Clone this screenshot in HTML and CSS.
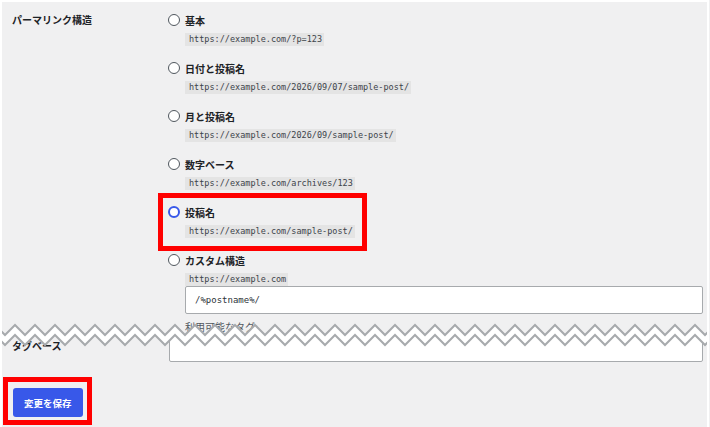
FILE: index.html
```
<!DOCTYPE html>
<html lang="ja">
<head>
<meta charset="utf-8">
<title>パーマリンク設定</title>
<link rel="stylesheet" href="styles.css">
</head>
<body>
<div class="frame">
  <form class="form">
    <div class="row">
      <div class="label">パーマリンク構造</div>
      <div class="field">
        <div class="option">
          <label class="opt-label"><span class="radio"></span>基本</label>
          <code class="code">https://example.com/?p=123</code>
        </div>
        <div class="option">
          <label class="opt-label"><span class="radio"></span>日付と投稿名</label>
          <code class="code">https://example.com/2026/09/07/sample-post/</code>
        </div>
        <div class="option">
          <label class="opt-label"><span class="radio"></span>月と投稿名</label>
          <code class="code">https://example.com/2026/09/sample-post/</code>
        </div>
        <div class="option">
          <label class="opt-label"><span class="radio"></span>数字ベース</label>
          <code class="code">https://example.com/archives/123</code>
        </div>
        <div class="option selected">
          <label class="opt-label"><span class="radio checked"></span>投稿名</label>
          <code class="code">https://example.com/sample-post/</code>
        </div>
        <div class="option custom">
          <label class="opt-label"><span class="radio"></span>カスタム構造</label>
          <code class="code">https://example.com</code>
          <div class="text-input indent"><span class="mono">/%postname%/</span></div>
          <p class="tags">利用可能なタグ:</p>
        </div>
      </div>
    </div>
    <div class="row tag-row">
      <div class="label tag-label">タグベース</div>
      <div class="field">
        <div class="text-input wide"></div>
      </div>
    </div>
    <div class="submit">
      <span class="mark"><button type="button" class="btn">変更を保存</button></span>
    </div>
  </form>
  <svg class="tear" width="712" height="32" viewBox="0 0 712 32" aria-hidden="true">
    <defs>
      <pattern id="zz" x="5" y="0" width="20" height="32" patternUnits="userSpaceOnUse">
        <path d="M-10 7 L0 17 L10 7 L20 17 L30 7 L30 17 L20 27 L10 17 L0 27 L-10 17 Z" fill="#ffffff"/>
        <path d="M-10 7 L0 17 L10 7 L20 17 L30 7" fill="none" stroke="#a7aaad" stroke-width="2"/>
        <path d="M-10 17 L0 27 L10 17 L20 27 L30 17" fill="none" stroke="#a7aaad" stroke-width="2"/>
      </pattern>
    </defs>
    <rect x="0" y="0" width="712" height="32" fill="url(#zz)"/>
  </svg>
</div>
</body>
</html>
```
FILE: styles.css
```
html, body {
  margin: 0;
  padding: 0;
}
body {
  background: #f0f0f1;
  color: #1d2327;
  font-family: "Noto Sans CJK JP", "Noto Sans", sans-serif;
}
.frame {
  position: relative;
  box-sizing: border-box;
  width: 709px;
  height: 427px;
  border: 2px solid #ffffff;
  border-bottom: none;
  padding-top: 8px;
  overflow: hidden;
}
.form {
  margin: 0;
}
.row {
  display: grid;
  grid-template-columns: 166px 1fr;
}
.label {
  padding-left: 10px;
  font-size: 10px;
  font-weight: 700;
  line-height: 20px;
}
.field {
  display: flex;
  flex-direction: column;
  align-items: flex-start;
  padding-right: 4px;
}
.option {
  display: flex;
  flex-direction: column;
  align-items: flex-start;
  margin-bottom: 12px;
}
.opt-label {
  display: flex;
  align-items: center;
  gap: 5px;
  height: 20px;
  font-size: 10px;
  font-weight: 700;
}
.radio {
  box-sizing: border-box;
  width: 12px;
  height: 12px;
  border: 1.5px solid #50575e;
  border-radius: 50%;
  background: #ffffff;
}
.radio.checked {
  border: 2.5px solid #3858e9;
}
.code {
  display: block;
  margin: 3px 0 0 17px;
  padding: 0 2px 0 4px;
  height: 13px;
  line-height: 13px;
  font-family: "DejaVu Sans Mono", monospace;
  font-size: 8.5px;
  background: #e4e4e4;
  color: #3c434a;
}
.selected {
  position: relative;
}
.selected::after {
  content: "";
  position: absolute;
  left: -10px;
  top: -9px;
  right: -12px;
  bottom: -13px;
  border: 5px solid #ff0000;
}
.custom {
  align-self: stretch;
  margin-bottom: 0;
}
.text-input {
  box-sizing: border-box;
  height: 28px;
  background: #ffffff;
  border: 1px solid #a7aaad;
  border-radius: 2px;
  display: flex;
  align-items: center;
}
.indent {
  margin-left: 17px;
  align-self: stretch;
  padding-left: 9px;
}
.mono {
  font-family: "DejaVu Sans Mono", monospace;
  font-size: 9px;
  color: #2c3338;
}
.tags {
  margin: 6px 0 0 17px;
  font-size: 10px;
  line-height: 14px;
  color: #50575e;
}
.tag-label {
  padding-top: 2px;
}
.wide {
  align-self: stretch;
  margin-left: 1px;
}
.submit {
  margin-top: 26px;
  padding-left: 11px;
  display: flex;
}
.mark {
  position: relative;
  display: flex;
}
.mark::after {
  content: "";
  position: absolute;
  left: -10px;
  top: -11px;
  right: -9px;
  bottom: -8px;
  border: 5px solid #ff0000;
}
.btn {
  height: 29px;
  padding: 0 11px;
  border: none;
  border-radius: 3px;
  background: #3858e9;
  color: #ffffff;
  font-family: "Noto Sans CJK JP", "Noto Sans", sans-serif;
  font-size: 9.5px;
  font-weight: 700;
}
.tear {
  position: absolute;
  left: -2px;
  top: 316px;
  display: block;
}
```
